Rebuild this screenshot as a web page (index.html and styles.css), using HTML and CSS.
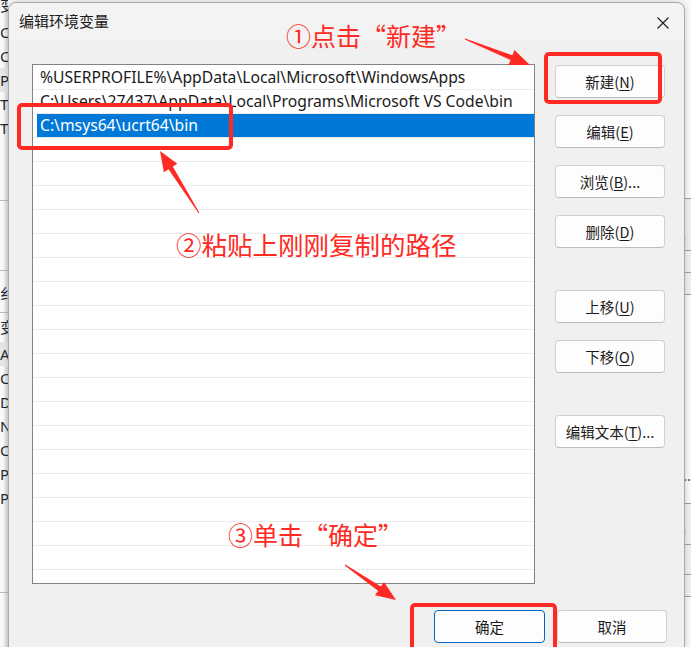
FILE: index.html
```html
<!DOCTYPE html>
<html lang="zh-CN">
<head>
<meta charset="utf-8">
<title>编辑环境变量</title>
<link rel="stylesheet" href="styles.css">
</head>
<body>
<div class="screen">
  <div class="bg-left">
    <div class="bl-row bl-top">变</div>
    <div class="bl-row">C</div>
    <div class="bl-row">C</div>
    <div class="bl-row bl-sel">P</div>
    <div class="bl-row">T</div>
    <div class="bl-row">T</div>
    <div class="bl-gap1"></div>
    <div class="bl-line"></div>
    <div class="bl-gap2"></div>
    <div class="bl-line"></div>
    <div class="bl-gap4"></div>
    <div class="bl-row bl-cjk">纟</div>
    <div class="bl-gap5"></div>
    <div class="bl-line"></div>
    <div class="bl-row bl-cjk bl-tall">变</div>
    <div class="bl-row bl-sel">A</div>
    <div class="bl-row">C</div>
    <div class="bl-row">D</div>
    <div class="bl-row">N</div>
    <div class="bl-row">C</div>
    <div class="bl-row">P</div>
    <div class="bl-row">P</div>
    <div class="bl-row bl-cut">P</div>
    <div class="bl-gap3"></div>
    <div class="bl-line"></div>
  </div>

  <div class="dialog">
    <div class="titlebar">
      <span class="title">编辑环境变量</span>
      <svg class="close" width="12" height="12" viewBox="0 0 12 12"><path d="M0.5 0.5 L11.5 11.5 M11.5 0.5 L0.5 11.5" stroke="#1b1b1b" stroke-width="1.1" fill="none"/></svg>
    </div>
    <div class="content">
      <div class="list">
        <div class="row"><span class="cell">%USERPROFILE%\AppData\Local\Microsoft\WindowsApps</span></div>
        <div class="row"><span class="cell">C:\Users\27437\AppData\Local\Programs\Microsoft VS Code\bin</span></div>
        <div class="row"><span class="cell selected">C:\msys64\ucrt64\bin</span></div>
        <div class="row"></div><div class="row"></div><div class="row"></div><div class="row"></div>
        <div class="row"></div><div class="row"></div><div class="row"></div><div class="row"></div>
        <div class="row"></div><div class="row"></div><div class="row"></div><div class="row"></div>
        <div class="row"></div><div class="row"></div><div class="row"></div><div class="row"></div>
        <div class="row"></div><div class="row"></div><div class="row"></div>
      </div>
      <div class="side">
        <button class="btn">新建(<u>N</u>)</button>
        <button class="btn">编辑(<u>E</u>)</button>
        <button class="btn">浏览(<u>B</u>)...</button>
        <button class="btn">删除(<u>D</u>)</button>
        <button class="btn spaced">上移(<u>U</u>)</button>
        <button class="btn">下移(<u>O</u>)</button>
        <button class="btn spaced">编辑文本(<u>T</u>)...</button>
      </div>
    </div>
    <div class="footer">
      <button class="btn btn-ok">确定</button>
      <button class="btn btn-cancel">取消</button>
    </div>
  </div>

  <div class="bg-right">
    <div class="br-a"></div>
    <div class="br-line"></div>
    <div class="br-b">)</div>
    <div class="br-line"></div>
    <div class="br-c"></div>
    <div class="br-line"></div>
    <div class="br-c"></div>
    <div class="br-line"></div>
    <div class="br-band"></div>
    <div class="br-d">…</div>
    <div class="br-line"></div>
    <div class="br-b2">)</div>
    <div class="br-line"></div>
    <div class="br-c2"></div>
    <div class="br-line"></div>
    <div class="br-c3"></div>
    <div class="br-line"></div>
  </div>
</div>

<svg class="overlay" width="691" height="647" viewBox="0 0 691 647">
  <g fill="none" stroke="#ff2a24" stroke-width="4">
    <rect x="546" y="54" width="114" height="48" rx="3"/>
    <rect x="19" y="105" width="212" height="43" rx="3"/>
    <rect x="412" y="605" width="143" height="60" rx="3"/>
  </g>
  <g fill="#ff2a24">
    <polygon points="464.8,39.5 510.5,59.9 508.5,65.0 530,65 514.4,50.1 512.4,55.3 465.2,38.5"/>
    <polygon points="199.4,212.7 172.8,166.6 177.4,163.7 160,151 163.9,172.2 168.5,169.3 198.6,213.3"/>
    <polygon points="344.7,565.4 378.1,590.7 375.0,595.3 396,600 384.0,582.1 380.9,586.6 345.3,564.6"/>
  </g>
</svg>
<div class="note note1">①点击“新建”</div>
<div class="note note2">②粘贴上刚刚复制的路径</div>
<div class="note note3">③单击“确定”</div>
</body>
</html>
```
FILE: styles.css
```css
* { box-sizing: border-box; }
html, body { margin: 0; padding: 0; }
body {
  width: 691px;
  height: 647px;
  overflow: hidden;
  background: #f7f7f7;
  font-family: "Noto Sans", "Noto Sans CJK SC", sans-serif;
  color: #1a1a1a;
  position: relative;
}
.screen {
  display: flex;
  width: 691px;
  height: 647px;
}

/* background window, left */
.bg-left {
  width: 8px;
  flex: none;
  overflow: hidden;
  background: #fafafa;
  display: flex;
  flex-direction: column;
  font-size: 15px;
  color: #1d2a3a;
  box-shadow: inset -3px 0 3px rgba(0,0,0,0.12);
}
.bl-row {
  height: 24px;
  line-height: 24px;
  white-space: nowrap;
  flex: none;
}
.bl-top { height: 20px; line-height: 10px; font-family: "Noto Sans CJK SC", sans-serif; }
.bl-sel { background: #e6e6e6; }
.bl-cjk { font-family: "Noto Sans CJK SC", sans-serif; }
.bl-tall { height: 29px; line-height: 28px; }
.bl-cut { height: 8px; line-height: 24px; overflow: hidden; }
.bl-gap1 { height: 60px; flex: none; }
.bl-gap2 { height: 69px; flex: none; }
.bl-gap3 { height: 74px; flex: none; }
.bl-gap4 { height: 10px; flex: none; }
.bl-gap5 { height: 7px; flex: none; }
.bl-line { height: 1px; background: #bdbdbd; flex: none; }

/* dialog */
.dialog {
  width: 677px;
  flex: none;
  margin-top: 2px;
  height: 660px;
  background: #f0f0f0;
  border: 1px solid #a9a9a9;
  border-radius: 8px 8px 0 0;
  display: flex;
  flex-direction: column;
  box-shadow: 0 0 6px rgba(0,0,0,0.18);
  position: relative;
}
.titlebar {
  height: 38px;
  flex: none;
  background: #f3f3f3;
  border-radius: 8px 8px 0 0;
  display: flex;
  align-items: center;
  justify-content: space-between;
  padding: 0 15px 0 10px;
}
.title {
  font-family: "Noto Sans CJK SC", sans-serif;
  font-size: 15px;
  color: #1a1a1a;
  margin-top: -3px;
}
.close { margin-top: 2px; }

.content {
  display: flex;
  padding: 23px 0 0 23px;
  gap: 20px;
}
.list {
  width: 503px;
  height: 520px;
  flex: none;
  background: #fff;
  border: 1px solid #838383;
  padding-top: 1px;
  overflow: hidden;
  font-size: 15.7px;
}
.row {
  height: 24px;
  border-bottom: 1px solid #ececec;
  display: flex;
}
.cell {
  display: block;
  margin-left: 4px;
  padding-left: 3px;
  line-height: 23px;
  white-space: nowrap;
  flex: 1;
  color: #1a1a1a;
}
.cell.selected {
  background: #0078d7;
  color: #ffffff;
}

.side {
  display: flex;
  flex-direction: column;
  gap: 17px;
  padding-top: 1px;
}
.btn {
  width: 110px;
  height: 33px;
  background: #fdfdfd;
  border: 1px solid #d0d0d0;
  border-bottom-color: #bdbdbd;
  border-radius: 4px;
  font-family: "Noto Sans CJK SC", sans-serif;
  font-size: 14.5px;
  color: #1a1a1a;
  padding: 0;
  display: flex;
  align-items: center;
  justify-content: center;
}
.btn u { text-underline-offset: 2px; }
.btn.spaced { margin-top: 25px; }

.footer {
  display: flex;
  justify-content: flex-end;
  gap: 12px;
  padding: 26px 17px 0 0;
}
.btn-ok {
  width: 111px;
  border: 1px solid #0067c0;
}
.btn-cancel { width: 110px; }

/* background window, right */
.bg-right {
  width: 6px;
  flex: none;
  overflow: hidden;
  background: #f8f8f8;
  display: flex;
  flex-direction: column;
  font-size: 15px;
  color: #1d3a6a;
}
.br-a { height: 198px; flex: none; }
.br-line { height: 1px; background: #a0a0a0; flex: none; }
.br-b { height: 51px; line-height: 76px; flex: none; background: #efefef; margin-left: -4px; }
.br-c { height: 21px; flex: none; background: #efefef; }
.br-band { height: 30px; flex: none; background: #f8f8f8; }
.br-d { height: 178px; flex: none; line-height: 300px; margin-left: -2px; color: #1a5ea8; }
.br-b2 { height: 40px; line-height: 50px; flex: none; background: #efefef; margin-left: -4px; }
.br-c2 { height: 29px; flex: none; background: #efefef; }
.br-c3 { height: 21px; flex: none; background: #efefef; }

/* annotations */
.overlay {
  position: absolute;
  left: 0;
  top: 0;
  pointer-events: none;
}
.note {
  position: absolute;
  font-family: "Noto Sans CJK SC", sans-serif;
  font-size: 25px;
  line-height: 1;
  color: #ff2a24;
  white-space: nowrap;
}
.note1 { left: 286px; top: 23px; }
.note2 { left: 176px; top: 231px; font-size: 25.5px; }
.note3 { left: 228px; top: 522px; font-size: 25px; }
```
